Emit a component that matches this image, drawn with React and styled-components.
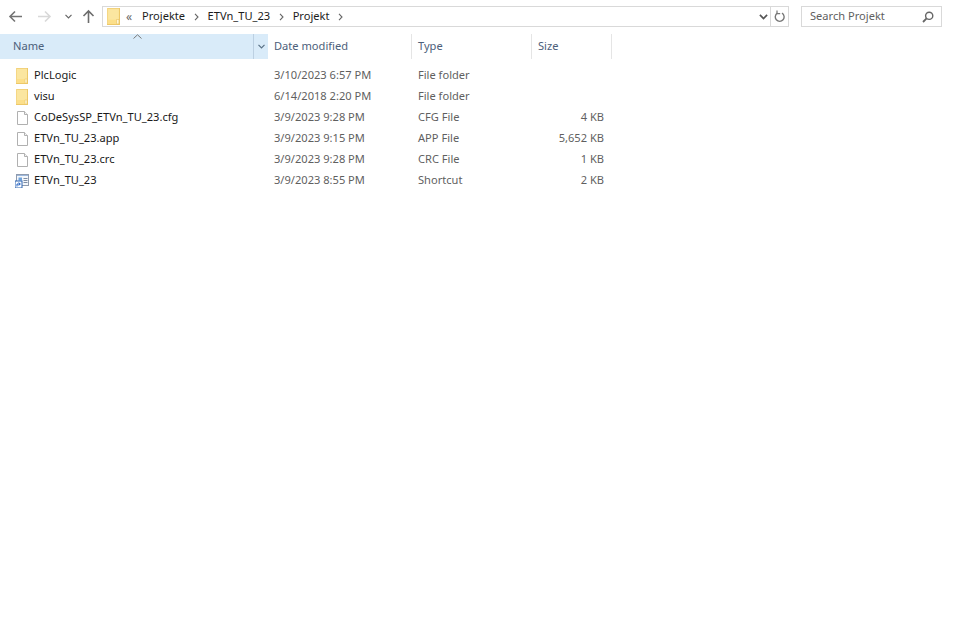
import React from 'react'
import styled, { createGlobalStyle } from 'styled-components'

const GlobalStyle = createGlobalStyle`
  html, body { margin: 0; padding: 0; background: #fff; }
  body { font-family: "Noto Sans", "Open Sans", sans-serif; font-size: 11.1px; color: #1a1a1a; }
`

const files = [
  { name: 'PlcLogic', date: '3/10/2023 6:57 PM', type: 'File folder', size: '', icon: 'folder' },
  { name: 'visu', date: '6/14/2018 2:20 PM', type: 'File folder', size: '', icon: 'folder' },
  { name: 'CoDeSysSP_ETVn_TU_23.cfg', date: '3/9/2023 9:28 PM', type: 'CFG File', size: '4 KB', icon: 'file' },
  { name: 'ETVn_TU_23.app', date: '3/9/2023 9:15 PM', type: 'APP File', size: '5,652 KB', icon: 'file' },
  { name: 'ETVn_TU_23.crc', date: '3/9/2023 9:28 PM', type: 'CRC File', size: '1 KB', icon: 'file' },
  { name: 'ETVn_TU_23', date: '3/9/2023 8:55 PM', type: 'Shortcut', size: '2 KB', icon: 'shortcut' },
]

const crumbs = ['Projekte', 'ETVn_TU_23', 'Projekt']

const Window = styled.div`
  width: 955px;
  height: 626px;
  overflow: hidden;
  background: #fff;
`

const Toolbar = styled.div`
  display: flex;
  align-items: center;
  height: 21px;
  padding: 6px 13px 7px 3px;
`

const NavButton = styled.button`
  display: flex;
  align-items: center;
  justify-content: center;
  width: ${p => p.$w}px;
  height: 21px;
  padding: 0;
  border: 0;
  background: none;
`

const AddressBar = styled.div`
  display: flex;
  align-items: center;
  width: 685px;
  height: 19px;
  margin-left: 1px;
  border: 1px solid #d9d9d9;
`

const FolderSlot = styled.div`
  display: flex;
  width: 19px;
  margin-left: 4px;
`

const Crumbs = styled.div`
  display: flex;
  flex: 1;
  align-items: center;
  color: #1c1c1c;
`

const Overflow = styled.span`
  width: 16px;
  color: #666;
  font-size: 12px;
  line-height: 16px;
`

const Crumb = styled.span`
  padding-bottom: 2px;
  white-space: nowrap;
`

const CrumbGap = styled.span`
  display: flex;
  justify-content: center;
  align-items: center;
  width: 22.5px;
`

const BarEnd = styled.div`
  display: flex;
  align-items: center;
  justify-content: center;
  width: ${p => p.$w}px;
  height: 19px;
  border-left: ${p => (p.$line ? '1px solid #d9d9d9' : '0')};
`

const SearchBox = styled.div`
  display: flex;
  align-items: center;
  justify-content: space-between;
  width: 124px;
  height: 19px;
  margin-left: 12px;
  padding: 0 7px 0 8px;
  border: 1px solid #d9d9d9;
  color: #5f5f5f;
`

const Lifted = styled.span`
  padding-bottom: 2px;
  white-space: nowrap;
`

const Columns = styled.div`
  display: grid;
  grid-template-columns: 268px 144px 120px 80px;
  width: 612px;
`

const Header = styled(Columns)`
  height: 25px;
  color: #4c607a;
`

const NameHead = styled.div`
  position: relative;
  display: flex;
  align-items: center;
  justify-content: space-between;
  padding-left: 13px;
  background: #d9ebf9;
`

const SortMark = styled.svg`
  position: absolute;
  top: 0;
  left: 133px;
`

const DropSlot = styled.div`
  display: flex;
  align-items: center;
  justify-content: center;
  width: 14px;
  height: 25px;
  border-left: 1px solid #bcd0e2;
`

const HeadCell = styled.div`
  display: flex;
  align-items: center;
  padding-left: 6px;
  border-right: 1px solid #e5e5e5;
`

const Rows = styled.div`
  padding-top: 6px;
`

const Row = styled(Columns)`
  height: 21px;
  align-items: center;
`

const NameCell = styled.div`
  display: flex;
  align-items: center;
  padding-left: ${p => (p.$shift ? 15 : 16)}px;
  color: #1a1a1a;
`

const IconSlot = styled.span`
  display: flex;
  width: 18px;
  margin-right: ${p => (p.$shift ? 1 : 0)}px;
`

const InfoCell = styled.div`
  padding: 0 0 2px 6px;
  color: #5f5f5f;
  white-space: nowrap;
`

const SizeCell = styled.div`
  padding: 0 8px 2px 0;
  text-align: right;
  color: #5f5f5f;
`

const FileGlyph = styled.svg`
  margin-left: 1px;
`

function FolderIcon({ width = 12, height = 16 }) {
  return (
    <svg width={width} height={height} viewBox="0 0 12 16" preserveAspectRatio="none">
      <rect x="0" y="0" width="12" height="16" fill="#fbe6a0" />
      <rect x="0" y="0" width="12" height="1" fill="#f2d27c" />
      <rect x="0" y="0" width="1" height="16" fill="#f5d785" />
      <rect x="0" y="15" width="12" height="1" fill="#edc868" />
      <rect x="11" y="0" width="1" height="16" fill="#edc868" />
      <rect x="1" y="11" width="8" height="4" fill="#fcdf8a" />
      <rect x="9" y="11" width="2" height="4" fill="#fff6d6" stroke="#e8c160" strokeWidth="0.5" />
    </svg>
  )
}

function FileIcon() {
  return (
    <FileGlyph width="11" height="14" viewBox="0 0 11 14">
      <path d="M0.5 0.5h7l3 3v10h-10z" fill="#fff" stroke="#b0b0b0" />
      <path d="M7.5 0.5v3h3" fill="#f4f4f4" stroke="#b0b0b0" />
    </FileGlyph>
  )
}

function ShortcutIcon() {
  return (
    <svg width="14" height="14" viewBox="0 0 14 14">
      <rect x="1.5" y="0.5" width="12" height="11" fill="#f4f7fb" stroke="#8f9bae" />
      <rect x="2" y="1" width="11" height="1" fill="#9db8dc" />
      <path d="M8.5 4.5h4M8.5 6.5h4M8.5 8.5h4" stroke="#7f8da3" />
      <rect x="3.5" y="3.5" width="3.5" height="3" fill="#6ea3dd" />
      <rect x="0" y="7" width="7" height="7" fill="#fff" stroke="#2a62b0" />
      <path d="M2 12.5v-2.5h3M3.6 8.6l1.8 1.4-1.8 1.4" fill="none" stroke="#1f5fc0" />
    </svg>
  )
}

function Arrow({ dir, color }) {
  const d = dir === 'left' ? 'M14 6.5H2M7 1.5l-5 5 5 5' : dir === 'right' ? 'M1 6.5h12M8 1.5l5 5-5 5' : 'M6.5 14V2M1.5 7l5-5 5 5'
  const size = dir === 'up' ? { width: 13, height: 15, viewBox: '0 0 13 15' } : { width: 15, height: 13, viewBox: '0 0 15 13' }
  return (
    <svg {...size}>
      <path d={d} fill="none" stroke={color} strokeWidth="1.6" />
    </svg>
  )
}

function Chevron({ color = '#666', width = 7, height = 5, strokeWidth = 1.2 }) {
  return (
    <svg width={width} height={height} viewBox="0 0 7 5">
      <path d="M0.5 0.8L3.5 3.8L6.5 0.8" fill="none" stroke={color} strokeWidth={strokeWidth} />
    </svg>
  )
}

function CrumbArrow() {
  return (
    <svg width="5" height="8" viewBox="0 0 5 8">
      <path d="M1 0.8L4 4L1 7.2" fill="none" stroke="#666" strokeWidth="1.1" />
    </svg>
  )
}

export default function App() {
  return (
    <Window>
      <GlobalStyle />
      <Toolbar>
        <NavButton $w={24}><Arrow dir="left" color="#747474" /></NavButton>
        <NavButton $w={34}><Arrow dir="right" color="#d8d8d8" /></NavButton>
        <NavButton $w={14}><Chevron /></NavButton>
        <NavButton $w={26}><Arrow dir="up" color="#6d6d6d" /></NavButton>
        <AddressBar>
          <FolderSlot><FolderIcon width={13} height={17} /></FolderSlot>
          <Crumbs>
            <Overflow>«</Overflow>
            {crumbs.map(c => (
              <React.Fragment key={c}>
                <Crumb>{c}</Crumb>
                <CrumbGap><CrumbArrow /></CrumbGap>
              </React.Fragment>
            ))}
          </Crumbs>
          <BarEnd $w={14}><Chevron color="#555" width={9} height={6} strokeWidth={1.4} /></BarEnd>
          <BarEnd $w={17} $line>
            <svg width="11" height="13" viewBox="0 0 11 13">
              <path d="M3.4 3.2A4.4 4.4 0 1 0 8 3.2" fill="none" stroke="#777" strokeWidth="1.4" />
              <path d="M3 0.5v3.2h3.2" fill="none" stroke="#777" strokeWidth="1.2" />
            </svg>
          </BarEnd>
        </AddressBar>
        <SearchBox>
          <Lifted>Search Projekt</Lifted>
          <svg width="12" height="12" viewBox="0 0 12 12">
            <circle cx="7.2" cy="4.8" r="3.6" fill="none" stroke="#666" strokeWidth="1.4" />
            <path d="M4.6 7.4L1 11" stroke="#666" strokeWidth="1.8" />
          </svg>
        </SearchBox>
      </Toolbar>
      <Header>
        <NameHead>
          <Lifted>Name</Lifted>
          <SortMark width="9" height="5" viewBox="0 0 9 5">
            <path d="M0.5 4.5L4.5 0.8L8.5 4.5" fill="none" stroke="#7a7a7a" />
          </SortMark>
          <DropSlot><Chevron color="#5a7186" width={7} height={5} /></DropSlot>
        </NameHead>
        <HeadCell><Lifted>Date modified</Lifted></HeadCell>
        <HeadCell><Lifted>Type</Lifted></HeadCell>
        <HeadCell><Lifted>Size</Lifted></HeadCell>
      </Header>
      <Rows>
        {files.map(f => {
          const shift = f.icon === 'shortcut'
          return (
            <Row key={f.name}>
              <NameCell $shift={shift}>
                <IconSlot $shift={shift}>
                  {f.icon === 'folder' && <FolderIcon />}
                  {f.icon === 'file' && <FileIcon />}
                  {f.icon === 'shortcut' && <ShortcutIcon />}
                </IconSlot>
                <Lifted>{f.name}</Lifted>
              </NameCell>
              <InfoCell>{f.date}</InfoCell>
              <InfoCell>{f.type}</InfoCell>
              <SizeCell>{f.size}</SizeCell>
            </Row>
          )
        })}
      </Rows>
    </Window>
  )
}
